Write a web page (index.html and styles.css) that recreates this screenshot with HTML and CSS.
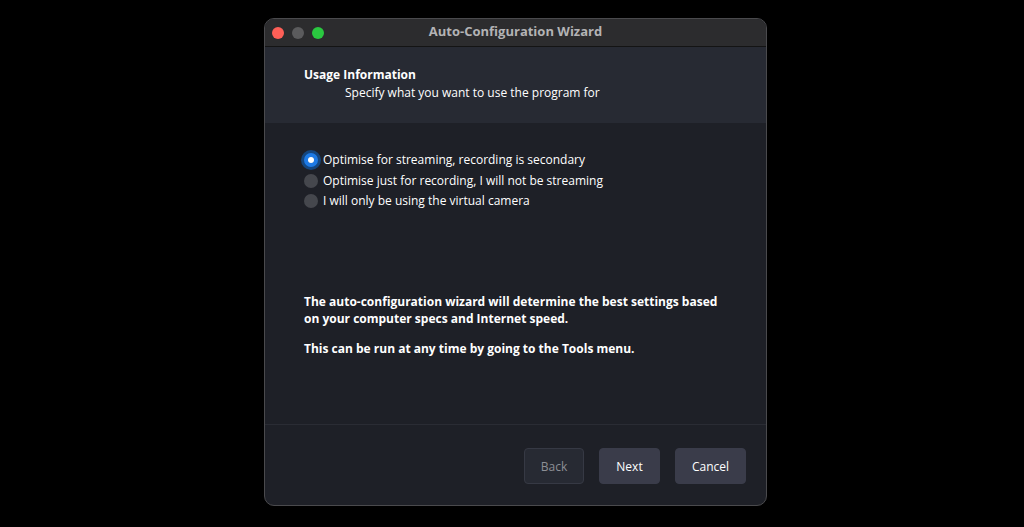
FILE: index.html
```html
<!DOCTYPE html>
<html>
  <head>
    <title>Auto-Configuration Wizard</title>
    <link rel="stylesheet" href="styles.css">
  </head>
  <body>
    <div class="window">
      <div class="titlebar">
        <div class="lights">
          <span class="light red"></span>
          <span class="light grey"></span>
          <span class="light green"></span>
        </div>
        <div class="title">Auto-Configuration Wizard</div>
      </div>
      <div class="header">
        <h1>Usage Information</h1>
        <p>Specify what you want to use the program for</p>
      </div>
      <div class="content">
        <div class="options">
          <label class="option"><span class="radio checked"></span>Optimise for streaming, recording is secondary</label>
          <label class="option"><span class="radio"></span>Optimise just for recording, I will not be streaming</label>
          <label class="option"><span class="radio"></span>I will only be using the virtual camera</label>
        </div>
        <div class="info">
          <p>The auto-configuration wizard will determine the best settings based on your computer specs and Internet speed.</p>
          <p>This can be run at any time by going to the Tools menu.</p>
        </div>
      </div>
      <div class="footer">
        <button class="btn disabled">Back</button>
        <button class="btn">Next</button>
        <button class="btn cancel">Cancel</button>
      </div>
    </div>
  </body>
</html>
```
FILE: styles.css
```css
html, body {
  margin: 0;
  height: 100%;
  background-color: #000;
}
body {
  font-family: "Open Sans", sans-serif;
  color: #fff;
  padding-top: 18px;
  box-sizing: border-box;
}
.window {
  width: 503px;
  height: 488px;
  margin-left: 264px;
  box-sizing: border-box;
  border: 1px solid #4a4a4d;
  border-radius: 10px;
  overflow: hidden;
  background-color: #1e2027;
  display: flex;
  flex-direction: column;
}
.titlebar {
  height: 27px;
  background-color: #2c2c2e;
  border-bottom: 1px solid #141414;
  display: flex;
  align-items: center;
  position: relative;
}
.lights {
  display: flex;
  gap: 8px;
  padding-left: 7px;
}
.light {
  width: 12px;
  height: 12px;
  border-radius: 50%;
}
.red { background-color: #fe5f57; }
.grey { background-color: #5b5b5d; }
.green { background-color: #2ac840; }
.title {
  position: absolute;
  left: 0;
  right: 0;
  top: 3px;
  text-align: center;
  font-size: 13px;
  line-height: 18px;
  font-weight: bold;
  color: #b3b3b5;
}
.header {
  height: 76px;
  box-sizing: border-box;
  background-color: #272a33;
  padding: 19px 0 0 39px;
}
.header h1 {
  font-size: 12px;
  font-weight: bold;
  margin: 0;
  line-height: 18px;
}
.header p {
  font-size: 12px;
  margin: 0 0 0 41px;
  line-height: 18px;
}
.content {
  flex: 1;
  padding: 27px 0 0 39px;
  border-bottom: 1px solid #2a2c34;
}
.options {
  display: flex;
  flex-direction: column;
}
.option {
  display: flex;
  align-items: center;
  font-size: 12px;
  line-height: 20px;
  height: 20.5px;
}
.radio {
  width: 14px;
  height: 14px;
  border-radius: 50%;
  background-color: #45474d;
  margin-right: 5px;
  box-sizing: border-box;
}
.radio.checked {
  background-color: #1d7ae6;
  border: 4px solid #1d7ae6;
  background-clip: padding-box;
  position: relative;
  box-shadow: 0 0 0 3px #14467f;
}
.radio.checked::after {
  content: "";
  position: absolute;
  left: 0;
  top: 0;
  width: 6px;
  height: 6px;
  border-radius: 50%;
  background-color: #fff;
}
.info {
  margin-top: 81px;
}
.info p {
  font-size: 12px;
  font-weight: bold;
  line-height: 17px;
  width: 425px;
  margin: 0 0 13px 0;
}
.footer {
  height: 80px;
  box-sizing: border-box;
  display: flex;
  justify-content: flex-end;
  gap: 15px;
  padding: 23px 20px 0 0;
}
.btn {
  font-family: "Open Sans", sans-serif;
  font-size: 12px;
  color: #fff;
  background-color: #3a3c4a;
  border: 1px solid #3a3c4a;
  border-radius: 4px;
  width: 61px;
  height: 36px;
  padding: 0;
}
.btn.cancel {
  width: 71px;
}
.btn.disabled {
  width: 60px;
  background-color: #272a33;
  border-color: #363944;
  color: #8d8f95;
}
```
